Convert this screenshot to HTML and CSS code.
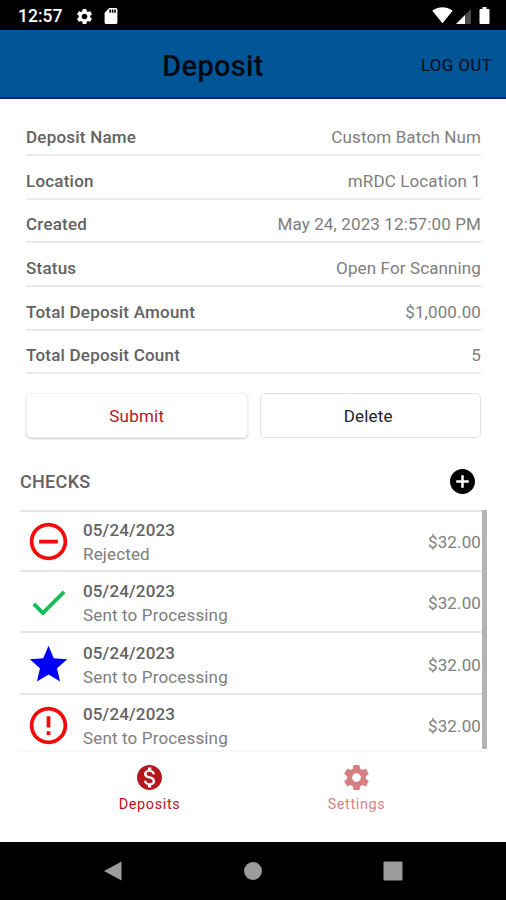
FILE: index.html
```
<!DOCTYPE html>
<html lang="en">
<head>
    <meta charset="UTF-8">
    <meta name="viewport" content="width=device-width, initial-scale=1.0">
    <title>Deposit</title>
    <link rel="stylesheet" href="styles.css">
</head>
<body>

    <div class="status-bar">
        <span class="clock">12:57</span>
        <svg class="status-gear" viewBox="0 0 24 24"><path d="M19.14 12.94c.04-.3.06-.61.06-.94 0-.32-.02-.64-.07-.94l2.03-1.58c.18-.14.23-.41.12-.61l-1.92-3.32c-.12-.22-.37-.29-.59-.22l-2.39.96c-.5-.38-1.03-.7-1.62-.94l-.36-2.54c-.04-.24-.24-.41-.48-.41h-3.84c-.24 0-.43.17-.47.41l-.36 2.54c-.59.24-1.13.57-1.62.94l-2.39-.96c-.22-.08-.47 0-.59.22L2.74 8.87c-.12.21-.08.47.12.61l2.03 1.58c-.05.3-.09.63-.09.94s.02.64.07.94l-2.03 1.58c-.18.14-.23.41-.12.61l1.92 3.32c.12.22.37.29.59.22l2.39-.96c.5.38 1.03.7 1.62.94l.36 2.54c.05.24.24.41.48.41h3.84c.24 0 .44-.17.47-.41l.36-2.54c.59-.24 1.13-.56 1.62-.94l2.39.96c.22.08.47 0 .59-.22l1.92-3.32c.12-.22.07-.47-.12-.61l-2.01-1.58zM12 15.6c-1.98 0-3.6-1.62-3.6-3.6s1.62-3.6 3.6-3.6 3.6 1.62 3.6 3.6-1.62 3.6-3.6 3.6z"/></svg>
        <svg class="status-card" viewBox="4 2 16 20"><path d="M18 2h-8L4.02 8 4 20c0 1.1.9 2 2 2h12c1.1 0 2-.9 2-2V4c0-1.1-.9-2-2-2zm-6 6h-2V4h2v4zm3 0h-2V4h2v4zm3 0h-2V4h2v4z"/></svg>
        <div class="status-right">
            <svg class="wifi" viewBox="0 3 24 19"><path d="M12.01 21.49L23.64 7c-.45-.34-4.93-4-11.64-4C5.28 3 .81 6.66.36 7l11.63 14.49.01.01.01-.01z"/></svg>
            <svg class="signal" viewBox="0 0 15 15"><path class="signal-dim" d="M9 6l6-6v15H9z"/><path d="M0 15l9-9v9z"/></svg>
            <svg class="battery" viewBox="0 0 10 17"><path d="M3 0h4v2h2a1 1 0 0 1 1 1v13a1 1 0 0 1-1 1H1a1 1 0 0 1-1-1V3a1 1 0 0 1 1-1h2z"/></svg>
        </div>
    </div>

    <header class="header">
        <h1 class="title">Deposit</h1>
        <a class="logout">LOG OUT</a>
    </header>

    <main class="content">
        <div class="details">
            <div class="detail"><b>Deposit Name</b><span>Custom Batch Num</span></div>
            <div class="detail"><b>Location</b><span>mRDC Location 1</span></div>
            <div class="detail"><b>Created</b><span>May 24, 2023 12:57:00 PM</span></div>
            <div class="detail"><b>Status</b><span>Open For Scanning</span></div>
            <div class="detail"><b>Total Deposit Amount</b><span>$1,000.00</span></div>
            <div class="detail"><b>Total Deposit Count</b><span>5</span></div>
        </div>

        <div class="buttons">
            <button class="button submit">Submit</button>
            <button class="button delete">Delete</button>
        </div>

        <div class="checks-header">
            <h2>CHECKS</h2>
            <svg class="add" viewBox="2 2 20 20"><path d="M12 2C6.48 2 2 6.48 2 12s4.48 10 10 10 10-4.48 10-10S17.52 2 12 2zm5 11h-4v4h-2v-4H7v-2h4V7h2v4h4v2z"/></svg>
        </div>

        <div class="checks">
            <div class="check-list">
                <div class="check">
                    <svg class="check-icon red" viewBox="0 0 24 24"><path d="M7 11v2h10v-2H7zm5-9C6.48 2 2 6.48 2 12s4.48 10 10 10 10-4.48 10-10S17.52 2 12 2zm0 18c-4.41 0-8-3.59-8-8s3.59-8 8-8 8 3.59 8 8-3.59 8-8 8z"/></svg>
                    <div class="check-text"><b>05/24/2023</b><span>Rejected</span></div>
                    <span class="amount">$32.00</span>
                </div>
                <div class="check">
                    <svg class="check-icon green" viewBox="0 0 24 24"><path d="M9 16.17L4.83 12l-1.42 1.41L9 19 21 7l-1.41-1.41z"/></svg>
                    <div class="check-text"><b>05/24/2023</b><span>Sent to Processing</span></div>
                    <span class="amount">$32.00</span>
                </div>
                <div class="check">
                    <svg class="check-icon blue" viewBox="0 0 24 24"><path d="M12 17.27L18.18 21l-1.64-7.03L22 9.24l-7.19-.61L12 2 9.19 8.63 2 9.24l5.46 4.73L5.82 21z"/></svg>
                    <div class="check-text"><b>05/24/2023</b><span>Sent to Processing</span></div>
                    <span class="amount">$32.00</span>
                </div>
                <div class="check">
                    <svg class="check-icon red" viewBox="0 0 24 24"><path d="M11 15h2v2h-2zm0-8h2v6h-2zm.99-5C6.47 2 2 6.48 2 12s4.47 10 9.99 10C17.52 22 22 17.52 22 12S17.52 2 11.99 2zM12 20c-4.42 0-8-3.58-8-8s3.58-8 8-8 8 3.58 8 8-3.58 8-8 8z"/></svg>
                    <div class="check-text"><b>05/24/2023</b><span>Sent to Processing</span></div>
                    <span class="amount">$32.00</span>
                </div>
            </div>
            <div class="scrollbar"></div>
        </div>
    </main>

    <nav class="tabs">
        <a class="tab active">
            <svg viewBox="2 2 20 20"><path d="M12 2C6.48 2 2 6.48 2 12s4.48 10 10 10 10-4.48 10-10S17.52 2 12 2zm1.41 16.09V20h-2.67v-1.93c-1.71-.36-3.16-1.46-3.27-3.4h1.96c.1 1.05.82 1.87 2.65 1.87 1.96 0 2.4-.98 2.4-1.59 0-.83-.44-1.61-2.67-2.14-2.48-.6-4.18-1.62-4.18-3.67 0-1.72 1.39-2.84 3.11-3.21V4h2.67v1.95c1.86.45 2.79 1.86 2.85 3.39H14.3c-.05-1.11-.64-1.87-2.22-1.87-1.5 0-2.4.68-2.4 1.64 0 .84.65 1.39 2.67 1.91s4.18 1.39 4.18 3.91c-.01 1.83-1.38 2.83-3.12 3.16z"/></svg>
            <span>Deposits</span>
        </a>
        <a class="tab">
            <svg viewBox="2 2 20 20"><path d="M19.43 12.98c.04-.32.07-.64.07-.98s-.03-.66-.07-.98l2.11-1.65c.19-.15.24-.42.12-.64l-2-3.46c-.12-.22-.39-.3-.61-.22l-2.49 1c-.52-.4-1.08-.73-1.69-.98l-.38-2.65C14.46 2.18 14.25 2 14 2h-4c-.25 0-.46.18-.49.42l-.38 2.65c-.61.25-1.17.59-1.69.98l-2.49-1c-.23-.09-.49 0-.61.22l-2 3.46c-.13.22-.07.49.12.64l2.11 1.65c-.04.32-.07.65-.07.98s.03.66.07.98l-2.11 1.65c-.19.15-.24.42-.12.64l2 3.46c.12.22.39.3.61.22l2.49-1c.52.4 1.08.73 1.69.98l.38 2.65c.03.24.24.42.49.42h4c.25 0 .46-.18.49-.42l.38-2.65c.61-.25 1.17-.59 1.69-.98l2.49 1c.23.09.49 0 .61-.22l2-3.46c.12-.22.07-.49-.12-.64l-2.11-1.65zM12 15.5c-1.93 0-3.5-1.57-3.5-3.5s1.57-3.5 3.5-3.5 3.5 1.57 3.5 3.5-1.57 3.5-3.5 3.5z"/></svg>
            <span>Settings</span>
        </a>
    </nav>

    <div class="nav-bar">
        <svg viewBox="0 0 20 20"><path d="M1 10L18.500 0.500v19z"/></svg>
        <svg viewBox="0 0 20 20"><circle cx="10" cy="10" r="9"/></svg>
        <svg viewBox="0 0 20 20"><rect x="0.500" y="0.500" width="19" height="19" rx="1"/></svg>
    </div>

</body>
</html>
```
FILE: styles.css
```
* {
    box-sizing: border-box;
}

body {
    font-family: Roboto, 'Liberation Sans', sans-serif;
    font-size: 17px;
    letter-spacing: 0.12px;
    margin: 0;
    height: 900px;
    display: flex;
    flex-direction: column;
    background: #fff;
    color: #7e7e7e;
    overflow: hidden;
}

b {
    font-weight: 500;
    letter-spacing: 0.22px;
    color: #626262;
}

/* Android status bar */
.status-bar {
    height: 30px;
    flex: none;
    display: flex;
    align-items: center;
    padding: 2px 16px 0 18px;
    background: #000;
    color: #fff;
    fill: #fff;
}

.clock {
    width: 57px;
    font-size: 17.5px;
    font-weight: 500;
    letter-spacing: 0;
}

.status-gear {
    width: 19px;
    height: 19px;
}

.status-card {
    width: 14px;
    height: 16px;
    margin-left: 10px;
}

.status-right {
    margin: 0 0 2px auto;
    display: flex;
    align-items: flex-end;
}

.wifi {
    width: 21px;
    height: 17px;
}

.signal {
    width: 15px;
    height: 15px;
    margin: 0 8px 0 3px;
}

.signal-dim {
    fill: #4a4a4a;
}

.battery {
    width: 11px;
    height: 17px;
}

/* App header */
.header {
    height: 69px;
    flex: none;
    display: grid;
    grid-template-columns: 1fr auto 1fr;
    align-items: center;
    padding: 4px 14px 0;
    background: #005596;
    border-bottom: 2px solid #06237c;
    color: #000a14;
}

.title {
    grid-column: 2;
    margin: 0 0 0 -80px;
    font-size: 29px;
    font-weight: 500;
    letter-spacing: 0.3px;
}

.logout {
    justify-self: end;
    padding-bottom: 2px;
    font-size: 17px;
    letter-spacing: 0.3px;
}

.content {
    flex: none;
    height: 651px;
    padding: 13.6px 0 0 20px;
}

.details {
    padding: 0 25px 0 6px;
}

.detail {
    height: 43.6px;
    display: flex;
    justify-content: space-between;
    align-items: flex-end;
    padding-bottom: 7px;
    line-height: 20px;
    border-bottom: 2px solid #ebebeb;
}

.buttons {
    display: grid;
    grid-template-columns: 1fr 1fr;
    gap: 12px;
    padding: 18.4px 25px 0 6px;
}

.button {
    height: 45px;
    padding: 2px 0 0;
    font-family: inherit;
    font-size: 17px;
    letter-spacing: 0.2px;
    background: #fff;
    border: 1px solid #e2e2e2;
    border-radius: 5px;
}

.submit {
    color: #b5171d;
    border-color: #f0f0f0;
    box-shadow: 0 1px 2px rgba(0, 0, 0, 0.2);
}

.delete {
    padding-right: 4px;
    color: #222;
}

.checks-header {
    display: flex;
    justify-content: space-between;
    align-items: center;
    height: 72px;
    padding: 15px 31px 0 0;
}

.checks-header h2 {
    margin: 0;
    font-size: 18px;
    font-weight: 500;
    letter-spacing: 0.3px;
    color: #626262;
}

.add {
    width: 25px;
    height: 25px;
    fill: #000;
}

.checks {
    display: flex;
    height: 239px;
    width: 467px;
    overflow: hidden;
}

.check-list {
    flex: 1;
}

.check {
    height: 61.4px;
    display: flex;
    align-items: center;
    padding: 2px 0 0 6px;
    border-top: 2px solid #e6e6e6;
}

.check:first-child {
    height: 60.4px;
}

.check-icon {
    width: 45px;
    height: 45px;
}

.red {
    fill: #f50a0a;
}

.green {
    fill: #12bd56;
}

.blue {
    fill: #0000fa;
}

.check-text {
    flex: 1;
    display: flex;
    flex-direction: column;
    line-height: 24px;
    letter-spacing: 0.15px;
    padding: 1px 0 0 12px;
}

.check-text b {
    letter-spacing: 0.15px;
}

.amount {
    padding: 1px 1px 0 0;
}

.scrollbar {
    width: 5px;
    background: #b3b3b3;
}

/* Bottom tabs */
.tabs {
    flex: none;
    height: 92px;
    display: flex;
    margin: 0 20px;
    padding: 0 26px;
    border-top: 2px solid #f7f7f7;
}

.tab {
    flex: 1;
    display: flex;
    flex-direction: column;
    align-items: center;
    padding-top: 13px;
    font-size: 14.5px;
    line-height: 18px;
    letter-spacing: 0.6px;
    color: #b5171d;
    fill: #b5171d;
    opacity: 0.55;
}

.tab svg {
    width: 25px;
    height: 25px;
    margin-bottom: 6px;
}

.active {
    opacity: 1;
}

/* Android navigation bar */
.nav-bar {
    flex: 1;
    display: flex;
    justify-content: space-between;
    align-items: center;
    padding: 0 103px;
    background: #000;
    fill: #9b9b9b;
}

.nav-bar svg {
    width: 20px;
    height: 20px;
}
```
